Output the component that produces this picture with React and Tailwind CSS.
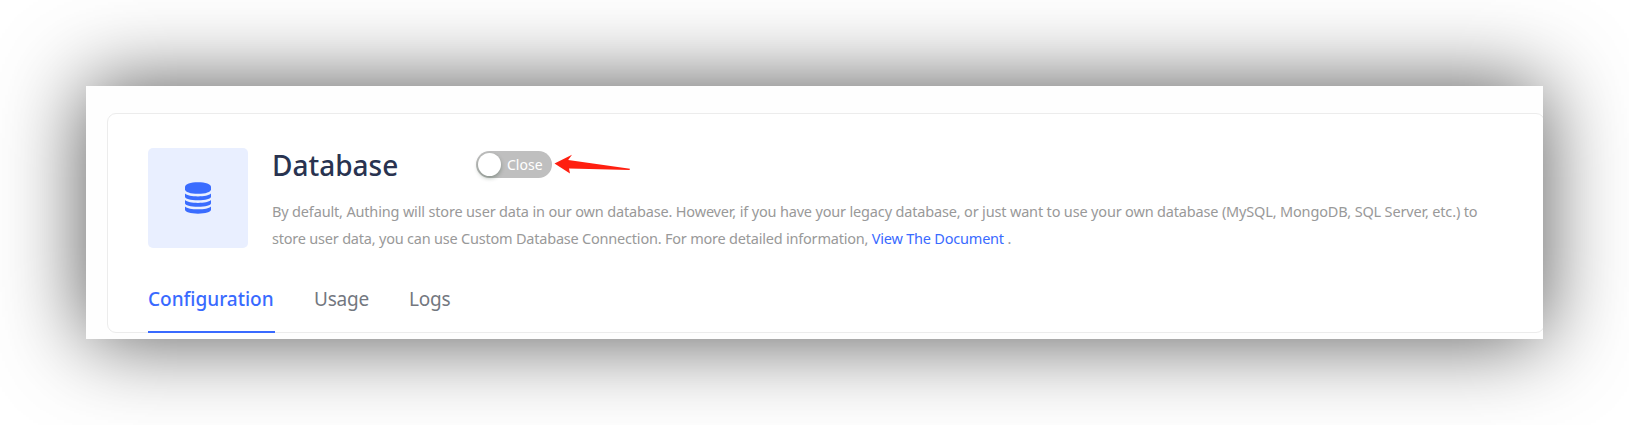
import React from "react";

const tabs = [
  { label: "Usage", cls: "ml-[39px] tracking-[-0.2px]" },
  { label: "Logs", cls: "ml-[40px] tracking-[-0.25px]" },
];

function DatabaseIcon() {
  return (
    <svg width="26" height="32" viewBox="0 0 26 32" fill="#3a6cff">
      <path d="M0 5C0 2 5.500 0.300 13 0.300S26 2 26 5v2.200C26 10 20.500 11.800 13 11.800S0 10 0 7.200z" />
      <path d="M0 11.500c2 2 7 2.900 13 2.900s11-.9 13-2.900v3.300c0 2-5.500 3.500-13 3.500S0 16.800 0 14.800z" />
      <path d="M0 18c2 2 7 2.900 13 2.900s11-.9 13-2.900v3.300c0 2-5.500 3.500-13 3.500S0 23.300 0 21.300z" />
      <path d="M0 24.400c2 2 7 2.900 13 2.900s11-.9 13-2.900v3.400c0 2.300-5.500 3.900-13 3.900S0 30.100 0 27.800z" />
    </svg>
  );
}

function Toggle() {
  return (
    <button className="flex h-[27px] w-[76px] shrink-0 items-center rounded-full bg-[#bfbfbf] pl-[2px]">
      <span className="h-[23px] w-[23px] shrink-0 rounded-full bg-white shadow-[0_2px_4px_rgba(0,35,11,0.3)]" />
      <span className="ml-[6px] text-[14px] leading-[27px] text-white">Close</span>
    </button>
  );
}

export default function App() {
  return (
    <div className="h-[425px] w-[1629px] overflow-hidden bg-white p-[86px] font-['Noto_Sans','Open_Sans',sans-serif]">
      <div className="h-[253px] w-[1457px] shadow-[0_0_80px_rgba(0,0,0,0.67)]">
        <div className="h-full w-full overflow-hidden bg-[#fefefe] pl-[21px] pt-[27px]">
          <section className="flex h-[220px] w-[1438px] flex-col rounded-[9px] border border-[#ececec] bg-white px-[40px] pt-[34px]">
            <div className="flex">
              <div className="flex h-[100px] w-[100px] shrink-0 items-center justify-center rounded-[5px] bg-[#e9efff]">
                <DatabaseIcon />
              </div>
              <div className="ml-[24px] flex flex-col whitespace-nowrap">
                <div className="flex h-[33px] items-center">
                  <h1 className="w-[204px] pt-[1px] text-[28px] font-medium leading-[34px] text-[#293350]">Database</h1>
                  <Toggle />
                  <svg className="ml-[2px]" width="78" height="22" viewBox="0 0 78 22" fill="#ff1f10">
                    <path d="M0.500 9.500 18 0.800 14.200 6 76 14.700 75.500 16 15 14.500 16 19.500z" />
                  </svg>
                </div>
                <p className="mt-[17px] text-[14.5px] leading-[27px] text-[#999999]">
                  <span className="block tracking-[-0.166px]">By default, Authing will store user data in our own database. However, if you have your legacy database, or just want to use your own database (MySQL, MongoDB, SQL Server, etc.) to</span>
                  <span className="block tracking-[-0.21px]">
                    store user data, you can use Custom Database Connection. For more detailed information,{" "}
                    <a className="text-[#396aff]">View The Document</a> .
                  </span>
                </p>
              </div>
            </div>
            <nav className="-mb-px mt-auto flex h-[66px] text-[19px] leading-[64px] text-[#73777f]">
              <a className="w-[127px] border-b-2 border-[#396aff] font-medium text-[#396aff]">Configuration</a>
              {tabs.map((t) => (
                <a key={t.label} className={t.cls}>{t.label}</a>
              ))}
            </nav>
          </section>
        </div>
      </div>
    </div>
  );
}
